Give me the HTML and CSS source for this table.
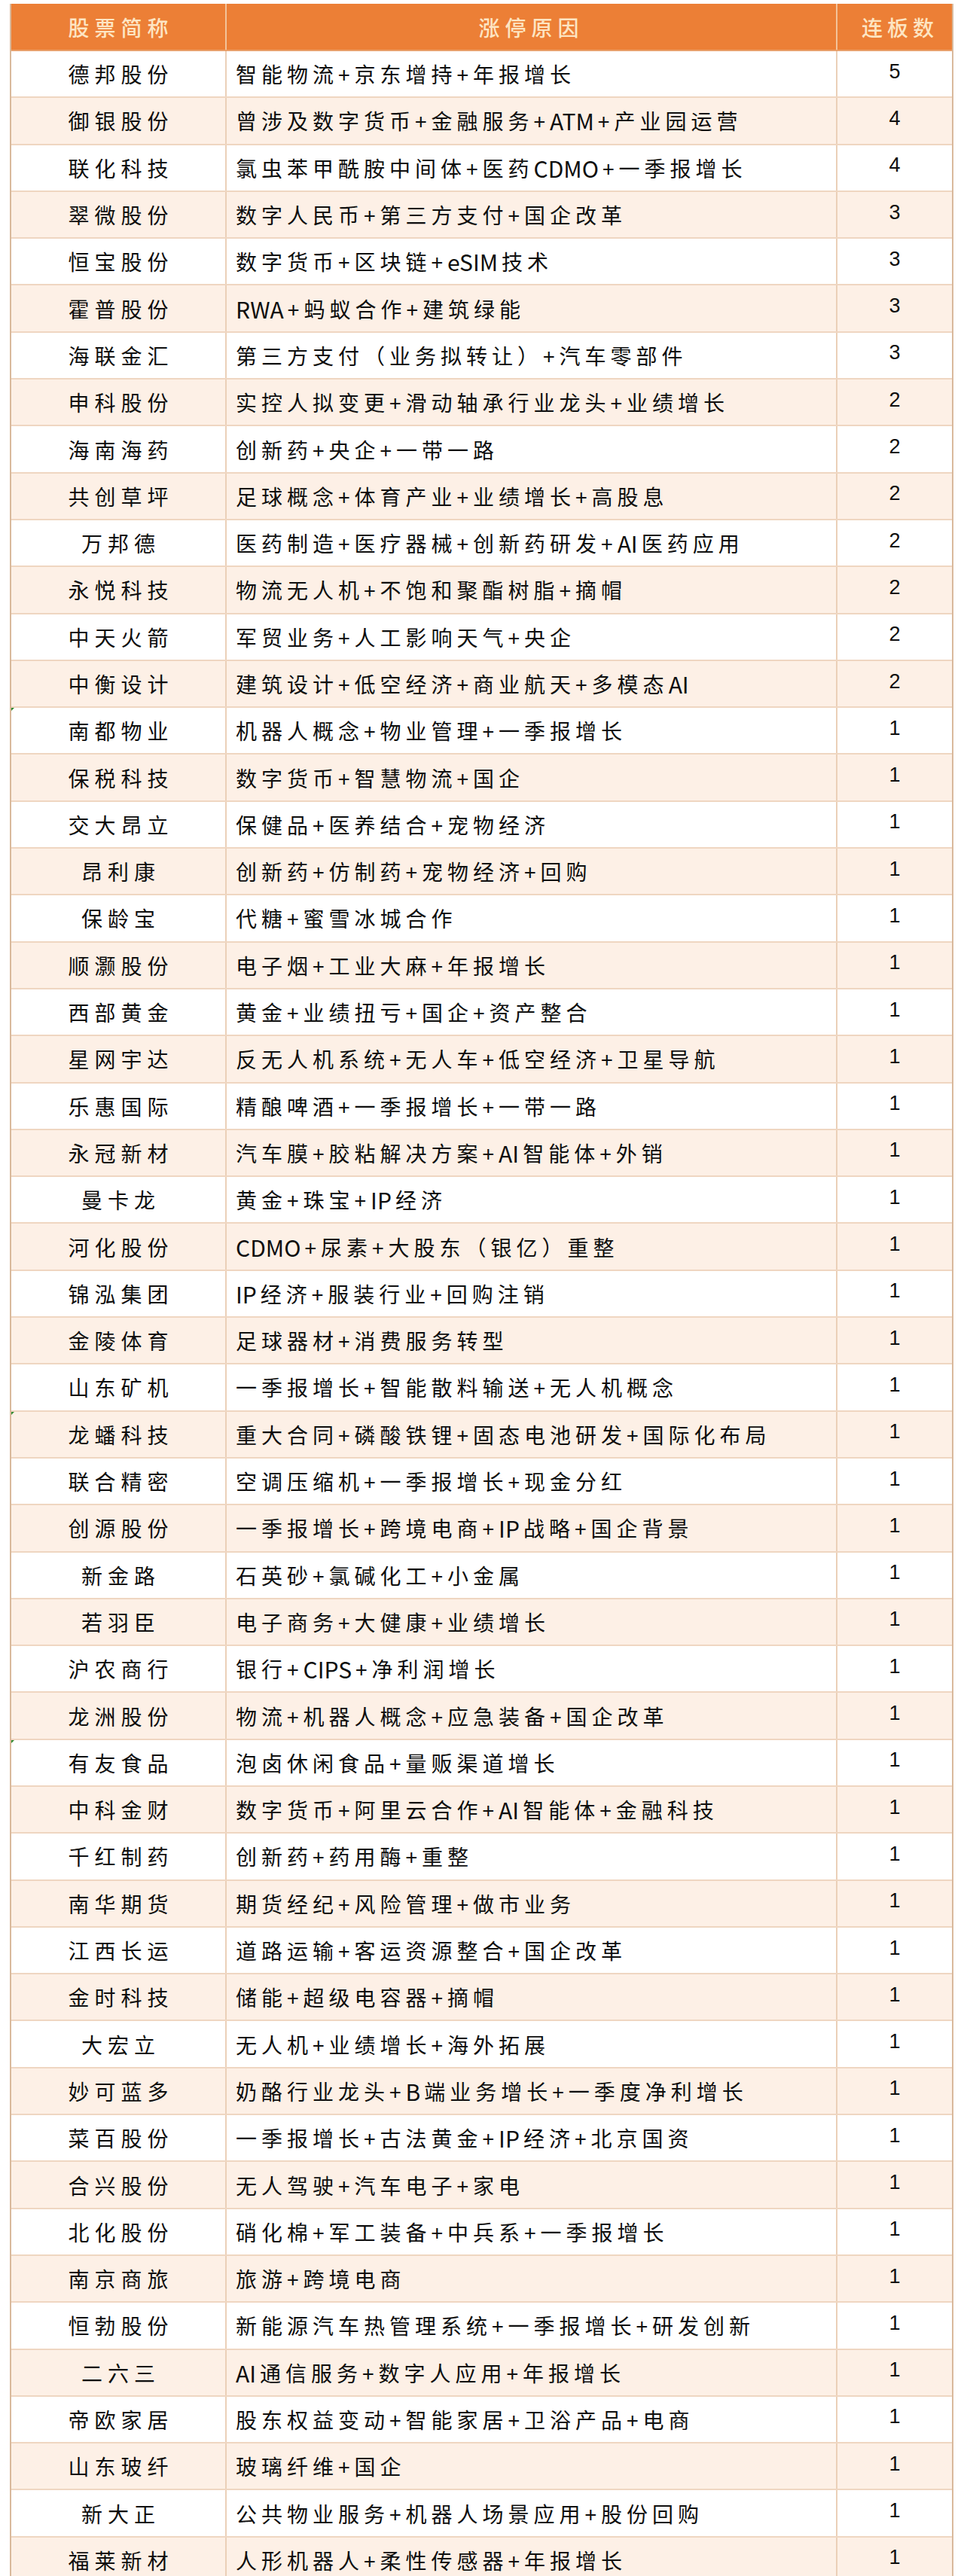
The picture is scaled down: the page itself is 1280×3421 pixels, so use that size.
FILE: index.html
```html
<!DOCTYPE html>
<html lang="zh-CN">
<head>
<meta charset="utf-8">
<title>涨停原因</title>
<link rel="stylesheet" href="styles.css">
</head>
<body>
<div class="page">
<div class="sheet">
<div class="row head"><div class="cell c1">股票简称</div><div class="cell c2">涨停原因</div><div class="cell c3">连板数</div></div>
<div class="row"><div class="cell c1">德邦股份</div><div class="cell c2">智能物流+京东增持+年报增长</div><div class="cell c3">5</div></div>
<div class="row"><div class="cell c1">御银股份</div><div class="cell c2">曾涉及数字货币+金融服务+<span class="en">ATM</span>+产业园运营</div><div class="cell c3">4</div></div>
<div class="row"><div class="cell c1">联化科技</div><div class="cell c2">氯虫苯甲酰胺中间体+医药<span class="en">CDMO</span>+一季报增长</div><div class="cell c3">4</div></div>
<div class="row"><div class="cell c1">翠微股份</div><div class="cell c2">数字人民币+第三方支付+国企改革</div><div class="cell c3">3</div></div>
<div class="row"><div class="cell c1">恒宝股份</div><div class="cell c2">数字货币+区块链+<span class="en">eSIM</span>技术</div><div class="cell c3">3</div></div>
<div class="row"><div class="cell c1">霍普股份</div><div class="cell c2"><span class="en">RWA</span>+蚂蚁合作+建筑绿能</div><div class="cell c3">3</div></div>
<div class="row"><div class="cell c1">海联金汇</div><div class="cell c2">第三方支付（业务拟转让）+汽车零部件</div><div class="cell c3">3</div></div>
<div class="row"><div class="cell c1">申科股份</div><div class="cell c2">实控人拟变更+滑动轴承行业龙头+业绩增长</div><div class="cell c3">2</div></div>
<div class="row"><div class="cell c1">海南海药</div><div class="cell c2">创新药+央企+一带一路</div><div class="cell c3">2</div></div>
<div class="row"><div class="cell c1">共创草坪</div><div class="cell c2">足球概念+体育产业+业绩增长+高股息</div><div class="cell c3">2</div></div>
<div class="row"><div class="cell c1">万邦德</div><div class="cell c2">医药制造+医疗器械+创新药研发+<span class="en">AI</span>医药应用</div><div class="cell c3">2</div></div>
<div class="row"><div class="cell c1">永悦科技</div><div class="cell c2">物流无人机+不饱和聚酯树脂+摘帽</div><div class="cell c3">2</div></div>
<div class="row"><div class="cell c1">中天火箭</div><div class="cell c2">军贸业务+人工影响天气+央企</div><div class="cell c3">2</div></div>
<div class="row"><div class="cell c1">中衡设计</div><div class="cell c2">建筑设计+低空经济+商业航天+多模态<span class="en">AI</span></div><div class="cell c3">2</div></div>
<div class="row"><div class="cell c1 flag">南都物业</div><div class="cell c2">机器人概念+物业管理+一季报增长</div><div class="cell c3">1</div></div>
<div class="row"><div class="cell c1">保税科技</div><div class="cell c2">数字货币+智慧物流+国企</div><div class="cell c3">1</div></div>
<div class="row"><div class="cell c1">交大昂立</div><div class="cell c2">保健品+医养结合+宠物经济</div><div class="cell c3">1</div></div>
<div class="row"><div class="cell c1">昂利康</div><div class="cell c2">创新药+仿制药+宠物经济+回购</div><div class="cell c3">1</div></div>
<div class="row"><div class="cell c1">保龄宝</div><div class="cell c2">代糖+蜜雪冰城合作</div><div class="cell c3">1</div></div>
<div class="row"><div class="cell c1">顺灏股份</div><div class="cell c2">电子烟+工业大麻+年报增长</div><div class="cell c3">1</div></div>
<div class="row"><div class="cell c1">西部黄金</div><div class="cell c2">黄金+业绩扭亏+国企+资产整合</div><div class="cell c3">1</div></div>
<div class="row"><div class="cell c1">星网宇达</div><div class="cell c2">反无人机系统+无人车+低空经济+卫星导航</div><div class="cell c3">1</div></div>
<div class="row"><div class="cell c1">乐惠国际</div><div class="cell c2">精酿啤酒+一季报增长+一带一路</div><div class="cell c3">1</div></div>
<div class="row"><div class="cell c1">永冠新材</div><div class="cell c2">汽车膜+胶粘解决方案+<span class="en">AI</span>智能体+外销</div><div class="cell c3">1</div></div>
<div class="row"><div class="cell c1">曼卡龙</div><div class="cell c2">黄金+珠宝+<span class="en">IP</span>经济</div><div class="cell c3">1</div></div>
<div class="row"><div class="cell c1">河化股份</div><div class="cell c2"><span class="en">CDMO</span>+尿素+大股东（银亿）重整</div><div class="cell c3">1</div></div>
<div class="row"><div class="cell c1">锦泓集团</div><div class="cell c2"><span class="en">IP</span>经济+服装行业+回购注销</div><div class="cell c3">1</div></div>
<div class="row"><div class="cell c1">金陵体育</div><div class="cell c2">足球器材+消费服务转型</div><div class="cell c3">1</div></div>
<div class="row"><div class="cell c1">山东矿机</div><div class="cell c2">一季报增长+智能散料输送+无人机概念</div><div class="cell c3">1</div></div>
<div class="row"><div class="cell c1 flag">龙蟠科技</div><div class="cell c2">重大合同+磷酸铁锂+固态电池研发+国际化布局</div><div class="cell c3">1</div></div>
<div class="row"><div class="cell c1">联合精密</div><div class="cell c2">空调压缩机+一季报增长+现金分红</div><div class="cell c3">1</div></div>
<div class="row"><div class="cell c1">创源股份</div><div class="cell c2">一季报增长+跨境电商+<span class="en">IP</span>战略+国企背景</div><div class="cell c3">1</div></div>
<div class="row"><div class="cell c1">新金路</div><div class="cell c2">石英砂+氯碱化工+小金属</div><div class="cell c3">1</div></div>
<div class="row"><div class="cell c1">若羽臣</div><div class="cell c2">电子商务+大健康+业绩增长</div><div class="cell c3">1</div></div>
<div class="row"><div class="cell c1">沪农商行</div><div class="cell c2">银行+<span class="en">CIPS</span>+净利润增长</div><div class="cell c3">1</div></div>
<div class="row"><div class="cell c1">龙洲股份</div><div class="cell c2">物流+机器人概念+应急装备+国企改革</div><div class="cell c3">1</div></div>
<div class="row"><div class="cell c1 flag">有友食品</div><div class="cell c2">泡卤休闲食品+量贩渠道增长</div><div class="cell c3">1</div></div>
<div class="row"><div class="cell c1">中科金财</div><div class="cell c2">数字货币+阿里云合作+<span class="en">AI</span>智能体+金融科技</div><div class="cell c3">1</div></div>
<div class="row"><div class="cell c1">千红制药</div><div class="cell c2">创新药+药用酶+重整</div><div class="cell c3">1</div></div>
<div class="row"><div class="cell c1">南华期货</div><div class="cell c2">期货经纪+风险管理+做市业务</div><div class="cell c3">1</div></div>
<div class="row"><div class="cell c1">江西长运</div><div class="cell c2">道路运输+客运资源整合+国企改革</div><div class="cell c3">1</div></div>
<div class="row"><div class="cell c1">金时科技</div><div class="cell c2">储能+超级电容器+摘帽</div><div class="cell c3">1</div></div>
<div class="row"><div class="cell c1">大宏立</div><div class="cell c2">无人机+业绩增长+海外拓展</div><div class="cell c3">1</div></div>
<div class="row"><div class="cell c1">妙可蓝多</div><div class="cell c2">奶酪行业龙头+<span class="en">B</span>端业务增长+一季度净利增长</div><div class="cell c3">1</div></div>
<div class="row"><div class="cell c1">菜百股份</div><div class="cell c2">一季报增长+古法黄金+<span class="en">IP</span>经济+北京国资</div><div class="cell c3">1</div></div>
<div class="row"><div class="cell c1">合兴股份</div><div class="cell c2">无人驾驶+汽车电子+家电</div><div class="cell c3">1</div></div>
<div class="row"><div class="cell c1">北化股份</div><div class="cell c2">硝化棉+军工装备+中兵系+一季报增长</div><div class="cell c3">1</div></div>
<div class="row"><div class="cell c1">南京商旅</div><div class="cell c2">旅游+跨境电商</div><div class="cell c3">1</div></div>
<div class="row"><div class="cell c1">恒勃股份</div><div class="cell c2">新能源汽车热管理系统+一季报增长+研发创新</div><div class="cell c3">1</div></div>
<div class="row"><div class="cell c1">二六三</div><div class="cell c2"><span class="en">AI</span>通信服务+数字人应用+年报增长</div><div class="cell c3">1</div></div>
<div class="row"><div class="cell c1">帝欧家居</div><div class="cell c2">股东权益变动+智能家居+卫浴产品+电商</div><div class="cell c3">1</div></div>
<div class="row"><div class="cell c1">山东玻纤</div><div class="cell c2">玻璃纤维+国企</div><div class="cell c3">1</div></div>
<div class="row"><div class="cell c1">新大正</div><div class="cell c2">公共物业服务+机器人场景应用+股份回购</div><div class="cell c3">1</div></div>
<div class="row"><div class="cell c1">福莱新材</div><div class="cell c2">人形机器人+柔性传感器+年报增长</div><div class="cell c3">1</div></div>
</div>
</div>
</body>
</html>
```
FILE: styles.css
```css
html, body {
  margin: 0;
  padding: 0;
  background: #ffffff;
}

.page {
  height: 3421px;
  overflow: hidden;
  padding-top: 5px;
  box-sizing: border-box;
}

.sheet {
  margin-left: 13px;
  width: 1253px;
  box-sizing: border-box;
  border-left: 2px solid #d9b99c;
  border-right: 2px solid #d9b99c;
  font-family: "Liberation Sans Narrow", "Noto Sans CJK SC", sans-serif;
  color: #0e0e0e;
}

.row {
  display: grid;
  grid-template-columns: 286px 811px 1fr;
  height: 62.3px;
  box-sizing: border-box;
  border-bottom: 2px solid #efd6c1;
  background: #ffffff;
}

.row:nth-child(odd) {
  background: #fdf0e6;
}

.row.head {
  height: 63px;
  background: #ec7f36;
  border-bottom: 2px solid #e9a06c;
  color: #fde5c3;
}

.cell {
  display: flex;
  align-items: center;
  box-sizing: border-box;
  border-right: 2px solid #ebd0b8;
  font-size: 28px;
  line-height: 1;
  white-space: nowrap;
  overflow: hidden;
}

.head .cell {
  border-right-color: #f3c39a;
  font-weight: 500;
}

.c1 {
  justify-content: center;
  letter-spacing: 7px;
  padding-left: 7px;
  position: relative;
}

.c2 {
  padding-left: 12px;
  letter-spacing: 6px;
}

.en {
  letter-spacing: 0;
  margin-right: 5px;
  font-size: 30px;
}

.head .c2 {
  justify-content: center;
  letter-spacing: 7px;
  padding-left: 0;
}

.c3 {
  justify-content: center;
  border-right: none;
  font-family: "Liberation Sans", Arial, sans-serif;
  font-size: 27px;
  padding-bottom: 6px;
}

.head .c3 {
  font-family: "Noto Sans CJK SC", sans-serif;
  font-size: 28px;
  letter-spacing: 6px;
  padding-bottom: 0;
  padding-left: 14px;
}

.flag::before {
  content: "";
  position: absolute;
  left: -2px;
  top: -2px;
  width: 0;
  height: 0;
  border-top: 8px solid #2f8a2f;
  border-right: 8px solid transparent;
}
```
